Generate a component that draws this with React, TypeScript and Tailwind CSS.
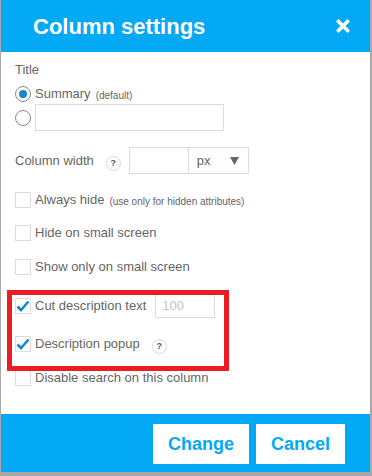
import React from 'react';

function HelpIcon() {
  return (
    <span className="inline-flex h-[15px] w-[15px] items-center justify-center rounded-full border border-[#d8d8d8] text-[9px] font-bold leading-none text-[#555]">
      ?
    </span>
  );
}

function Check({checked}: {checked?: boolean}) {
  return (
    <span className="flex h-[16px] w-[16px] shrink-0 items-center justify-center border border-[#dcdcdc] bg-white">
      {checked ? (
        <svg width="14" height="12" viewBox="0 0 14 12">
          <path d="M1.5 6.5 L5 10 L12.5 1.5" fill="none" stroke="#1b87c9" strokeWidth="2.6" />
        </svg>
      ) : null}
    </span>
  );
}

function Radio({checked}: {checked?: boolean}) {
  return (
    <span className="flex h-[16px] w-[16px] shrink-0 items-center justify-center rounded-full border border-[#8a8a8a] bg-white">
      {checked ? <span className="h-[8px] w-[8px] rounded-full bg-[#1b87c9]" /> : null}
    </span>
  );
}

function CheckRow({label, note, checked, className}: {label: string; note?: string; checked?: boolean; className: string}) {
  return (
    <div className={`flex h-[20px] items-center gap-[4px] ${className}`}>
      <Check checked={checked} />
      <span className="text-[13px] text-[#666]">{label}</span>
      {note ? <span className="ml-[1px] mt-[2px] text-[10px] text-[#666]">{note}</span> : null}
    </div>
  );
}

export default function App() {
  return (
    <div className="h-[476px] w-[372px] bg-[#a8a8a8] font-['Liberation_Sans',Arial,sans-serif]">
      <div className="relative ml-[1px] flex h-[472px] w-[369px] flex-col bg-white">
        <div className="flex h-[52px] items-center justify-between bg-[#03a9f4] pl-[32px] pr-[20px]">
          <span className="text-[22px] font-bold text-white">Column settings</span>
          <svg width="14" height="14" viewBox="0 0 14 14">
            <path d="M2.5 2.5 L11.5 11.5 M11.5 2.5 L2.5 11.5" stroke="white" strokeWidth="3.6" strokeLinecap="square" />
          </svg>
        </div>

        <div className="flex flex-col pl-[14px]">
          <div className="mt-[10px] h-[16px] text-[13px] leading-[16px] text-[#666]">Title</div>
          <div className="mt-[6px] flex h-[20px] items-center gap-[4px]">
            <Radio checked />
            <span className="text-[13px] text-[#666]">Summary</span>
            <span className="ml-[1px] mt-[2px] text-[10px] text-[#666]">(default)</span>
          </div>
          <div className="flex h-[27px] items-center gap-[4px]">
            <Radio />
            <div className="h-[27px] w-[189px] border border-[#dcdcdc]" />
          </div>

          <div className="mt-[16px] flex h-[27px] items-center">
            <span className="text-[13px] text-[#666]">Column width</span>
            <span className="ml-[12px]">
              <HelpIcon />
            </span>
            <div className="ml-[8px] h-[27px] w-[60px] border border-[#dcdcdc]" />
            <div className="flex h-[27px] w-[60px] items-center justify-between border border-l-0 border-[#dcdcdc] pl-[8px] pr-[9px]">
              <span className="text-[13px] text-[#666]">px</span>
              <svg width="9" height="8" viewBox="0 0 9 8">
                <path d="M0 0 H9 L4.5 8 Z" fill="#5c6870" />
              </svg>
            </div>
          </div>

          <CheckRow className="mt-[16px]" label="Always hide" note="(use only for hidden attributes)" />
          <CheckRow className="mt-[13px]" label="Hide on small screen" />
          <CheckRow className="mt-[14px]" label="Show only on small screen" />

          <div className="mt-[16px] flex h-[25px] items-center gap-[4px]">
            <Check checked />
            <span className="text-[13px] text-[#666]">Cut description text</span>
            <div className="ml-[5px] flex h-[25px] w-[60px] items-center border border-[#dcdcdc] pl-[6px] text-[13px] text-[#c4c4c4]">
              100
            </div>
          </div>
          <div className="mt-[16px] flex h-[20px] items-center gap-[4px]">
            <Check checked />
            <span className="text-[13px] text-[#666]">Description popup</span>
            <span className="ml-[8px]">
              <HelpIcon />
            </span>
          </div>
          <CheckRow className="mt-[14px]" label="Disable search on this column" />
        </div>

        <div className="mt-auto flex h-[58px] items-start justify-end gap-[7px] bg-[#03a9f4] pr-[25px] pt-[10px]">
          <button className="h-[40px] w-[96px] bg-white text-[18px] font-bold text-[#03a9f4]">Change</button>
          <button className="h-[40px] w-[89px] bg-white text-[18px] font-bold text-[#03a9f4]">Cancel</button>
        </div>

        <div className="pointer-events-none absolute left-[6px] top-[290px] h-[81px] w-[222px] border-[5px] border-[#ec1c24]" />
      </div>
    </div>
  );
}
